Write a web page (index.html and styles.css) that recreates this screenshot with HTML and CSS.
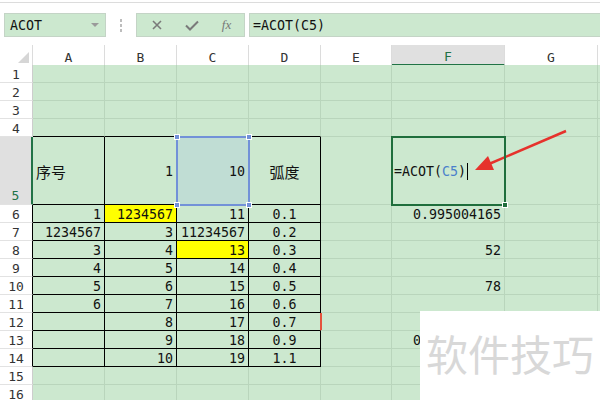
FILE: index.html
```html
<!DOCTYPE html>
<html>
<head>
<meta charset="utf-8">
<link rel="stylesheet" href="styles.css">
</head>
<body>
<div class="topbar">
  <div class="topline"></div>
  <div class="tools">
    <div class="namebox"><span>ACOT</span><i class="caret"></i></div>
    <div class="grip"><i></i><i></i><i></i></div>
    <div class="btns">
      <span class="btn"><svg width="10" height="10" viewBox="0 0 10 10"><path d="M1 1L9 9M9 1L1 9" stroke="#7a7a7a" stroke-width="1.6" fill="none"/></svg></span>
      <span class="btn"><svg width="14" height="11" viewBox="0 0 14 11"><path d="M1 5.5L5 9.5L13 1.5" stroke="#7a7a7a" stroke-width="2" fill="none"/></svg></span>
      <span class="btn fx">fx</span>
    </div>
    <div class="formula">=ACOT(C5)</div>
  </div>
</div>
<div class="sheet">
  <div class="row hdr"><span class="corner"><i class="tri"></i></span><span>A</span><span>B</span><span>C</span><span>D</span><span>E</span><span class="act">F</span><span>G</span><span></span></div>
  <div class="row"><span class="rh">1</span><span></span><span></span><span></span><span></span><span></span><span></span><span></span><span></span></div>
  <div class="row"><span class="rh">2</span><span></span><span></span><span></span><span></span><span></span><span></span><span></span><span></span></div>
  <div class="row"><span class="rh">3</span><span></span><span></span><span></span><span></span><span></span><span></span><span></span><span></span></div>
  <div class="row"><span class="rh">4</span><span class="tt"></span><span class="tt"></span><span class="tt"></span><span class="tt"></span><span></span><span></span><span></span><span></span></div>
  <div class="row r5"><span class="rh">5</span><span class="t cjk">序号</span><span class="t n">1</span><span class="t n csel">10<b class="sel"><i class="h1"></i><i class="h2"></i><i class="h3"></i><i class="h4"></i></b></span><span class="t c cjk">弧度</span><span></span><span class="fcell">=ACOT(<em>C5</em>)<i class="cursor"></i><b class="fsel"><i></i></b></span><span></span><span></span></div>
  <div class="row"><span class="rh rb">6</span><span class="t n">1</span><span class="t n y">1234567</span><span class="t n">11</span><span class="t c">0.1</span><span></span><span class="n">0.995004165</span><span></span><span></span></div>
  <div class="row"><span class="rh rb">7</span><span class="t n">1234567</span><span class="t n">3</span><span class="t n">11234567</span><span class="t c">0.2</span><span></span><span></span><span></span><span></span></div>
  <div class="row"><span class="rh rb">8</span><span class="t n">3</span><span class="t n">4</span><span class="t n y">13</span><span class="t c">0.3</span><span></span><span class="n">52</span><span></span><span></span></div>
  <div class="row"><span class="rh rb">9</span><span class="t n">4</span><span class="t n">5</span><span class="t n">14</span><span class="t c">0.4</span><span></span><span></span><span></span><span></span></div>
  <div class="row"><span class="rh rb">10</span><span class="t n">5</span><span class="t n">6</span><span class="t n">15</span><span class="t c">0.5</span><span></span><span class="n">78</span><span></span><span></span></div>
  <div class="row"><span class="rh rb">11</span><span class="t n">6</span><span class="t n">7</span><span class="t n">16</span><span class="t c">0.6</span><span></span><span></span><span></span><span></span></div>
  <div class="row"><span class="rh rb">12</span><span class="t n"></span><span class="t n">8</span><span class="t n">17</span><span class="t c mk">0.7</span><span class="mk2"></span><span></span><span></span><span></span></div>
  <div class="row"><span class="rh rb">13</span><span class="t n"></span><span class="t n">9</span><span class="t n">18</span><span class="t c">0.9</span><span></span><span class="n">0.785398163</span><span></span><span></span></div>
  <div class="row"><span class="rh rb">14</span><span class="t n"></span><span class="t n">10</span><span class="t n">19</span><span class="t c">1.1</span><span></span><span></span><span></span><span></span></div>
  <div class="row"><span class="rh">15</span><span></span><span></span><span></span><span></span><span></span><span></span><span></span><span></span></div>
  <div class="row"><span class="rh">16</span><span></span><span></span><span></span><span></span><span></span><span></span><span></span><span></span></div>
</div>
<svg class="arrow" width="600" height="400" viewBox="0 0 600 400">
  <line x1="566" y1="131" x2="489" y2="164" stroke="#e6322c" stroke-width="2.5"/>
  <polygon points="475,170 494,170 488,156" fill="#e6322c"/>
</svg>
<div class="wm">软件技巧</div>
</body>
</html>
```
FILE: styles.css
```css
:root {
  --g: #cce8cf;
  --gl: #b9d5bc;
  --dg: #217346;
}
* { box-sizing: border-box; }
body {
  margin: 0;
  width: 600px;
  height: 400px;
  overflow: hidden;
  position: relative;
  background: #fff;
  font-family: "DejaVu Sans Mono", "Liberation Mono", monospace;
  font-size: 13.3px;
  color: #111;
}
.topbar { height: 45px; padding-top: 2px; }
.topline { height: 1px; background: #dcdcdc; }
.tools { display: flex; align-items: center; height: 24px; margin-top: 10px; }
.namebox {
  margin-left: 4px;
  width: 102px;
  height: 24px;
  border: 1px solid #c4d4c6;
  background: var(--g);
  display: flex;
  align-items: center;
  padding: 0 6px 0 5px;
}
.caret {
  margin-left: auto;
  width: 0;
  height: 0;
  border-left: 4px solid transparent;
  border-right: 4px solid transparent;
  border-top: 4px solid #9a9a9a;
}
.grip { width: 30px; display: flex; flex-direction: column; align-items: center; gap: 2px; }
.grip i { width: 2px; height: 3px; background: #bdbdbd; }
.btns {
  width: 109px;
  height: 24px;
  border: 1px solid #c4d4c6;
  background: var(--g);
  display: flex;
  align-items: center;
  padding-left: 2px;
}
.btn { width: 36px; display: flex; justify-content: center; align-items: center; color: #777; }
.fx { font-family: "Liberation Serif", serif; font-style: italic; font-size: 13px; }
.formula {
  flex: 1;
  margin-left: 4px;
  margin-right: -4px;
  height: 24px;
  border: 1px solid #c4d4c6;
  background: var(--g);
  display: flex;
  align-items: center;
  padding-left: 3px;
}
.row {
  display: grid;
  grid-template-columns: 33px 72px 72px 72px 72px 71px 113px 93px 1fr;
  height: 18px;
}
.row > span {
  display: flex;
  align-items: center;
  background: var(--g);
  border-right: 1px solid var(--gl);
  border-bottom: 1px solid var(--gl);
  padding: 2px 3px 0 3px;
  white-space: nowrap;
}
.row > .rh {
  background: #fff;
  border-right-color: #cdcdcd;
  border-bottom-color: #e2e2e2;
  justify-content: center;
  color: #333;
  font-size: 13px;
  padding: 2px 0 0 0;
}
.row > .rb { border-right-color: #000; }
.row.hdr { height: 20px; }
.hdr > span {
  background: #fff;
  border-right-color: #dcdcdc;
  border-bottom-color: #cdcdcd;
  justify-content: center;
  color: #333;
  font-size: 13px;
  padding-top: 4px;
}
.hdr > .act { background: #e0e0e0; border-bottom: 2px solid var(--dg); color: var(--dg); }
.hdr > .corner { align-items: flex-end; justify-content: flex-end; padding: 0 3px 2px 0; }
.tri {
  width: 0;
  height: 0;
  border-left: 11px solid transparent;
  border-bottom: 11px solid #d6d6d6;
}
.row.r5 { height: 68px; }
.r5 > .rh {
  align-items: flex-end;
  background: #e0e0e0;
  color: var(--dg);
  border-right: 2px solid var(--dg);
  padding-bottom: 1px;
}
.row > .t { border-right-color: #000; border-bottom-color: #000; }
.row > .tt { border-bottom-color: #000; }
.row > .n { justify-content: flex-end; }
.row > .c { justify-content: center; }
.row > .y { background: #ffff00; }
.row > .cjk { font-family: "Noto Sans CJK SC", sans-serif; font-size: 15px; }
.row > .csel { background: #c0ddd4; position: relative; }
.sel {
  position: absolute;
  left: -1px;
  top: -1px;
  right: -2px;
  bottom: -2px;
  border: 2px solid #7291d8;
  z-index: 2;
}
.sel i {
  position: absolute;
  width: 6px;
  height: 6px;
  background: #7291d8;
  border: 1px solid #fff;
}
.sel .h1 { left: -4px; top: -4px; }
.sel .h2 { right: -4px; top: -4px; }
.sel .h3 { left: -4px; bottom: -4px; }
.sel .h4 { right: -4px; bottom: -4px; }
.row > .fcell { position: relative; padding-left: 2px; }
.fcell em { font-style: normal; color: #4a7fcb; }
.cursor { width: 1px; height: 17px; background: #000; margin-left: 1px; }
.fsel {
  position: absolute;
  left: -1px;
  top: -1px;
  right: -2px;
  bottom: -2px;
  border: 2px solid #1f6e3c;
  z-index: 2;
}
.fsel i {
  position: absolute;
  right: -4px;
  bottom: -4px;
  width: 6px;
  height: 6px;
  background: #1f6e3c;
  border: 1px solid #fff;
}
.row > .mk { border-right-color: #e5533d; }
.row > .mk2 { box-shadow: inset 1px 0 0 #e5533d; }
.arrow { position: absolute; left: 0; top: 0; pointer-events: none; }
.wm {
  position: absolute;
  left: 420px;
  top: 311px;
  width: 180px;
  height: 89px;
  background: #fff;
  color: #d8d8d8;
  font-family: "Noto Sans CJK SC", sans-serif;
  font-size: 42px;
  line-height: 42px;
  padding: 21px 0 0 6px;
  white-space: nowrap;
}
```
